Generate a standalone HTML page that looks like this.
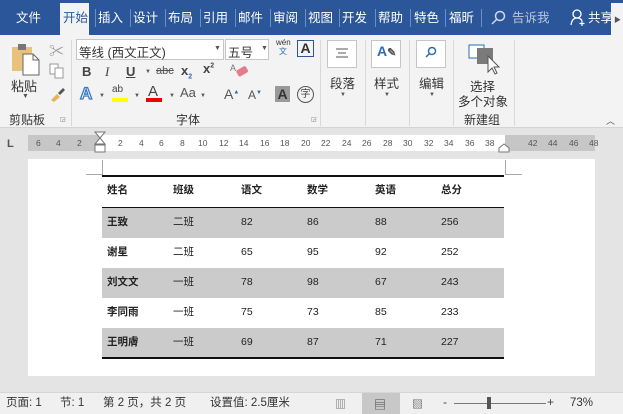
<!DOCTYPE html>
<html><head><meta charset="utf-8"><style>
*{margin:0;padding:0;box-sizing:border-box}
body{width:623px;height:414px;overflow:hidden;background:#e4e4e4;font-family:"Liberation Sans","Noto Sans CJK SC",sans-serif;font-size:12px;color:#222;position:relative}
.a{position:absolute;white-space:nowrap}
.tb{background:#2b579a;left:0;top:0;width:623px;height:35px}
.tab{color:#fff;font-size:12.5px;top:9px;line-height:18px}
.sep{position:absolute;top:9px;width:1px;height:18px;background:#6d8fc0}
.rib{left:0;top:35px;width:623px;height:93px;background:#f3f3f3;border-bottom:1px solid #d4d4d4}
.vs{position:absolute;width:1px;background:#d8d8d8;top:40px;height:86px}
.gl{font-size:12px;color:#333}
.box{position:absolute;border:1px solid #c6c6c6;background:#fff}
.page{left:28px;top:159px;width:567px;height:217px;background:#fff}
.row{position:absolute;left:102px;width:402px;height:30px}
.c{position:absolute;top:7px;font-size:10.5px;line-height:15px;color:#222}
.b{font-weight:bold}
.st{font-size:11.5px;color:#333;top:396px;line-height:15px}
</style></head><body>
<div class="a tb"></div>
<div class="a" style="left:60px;top:3px;width:29px;height:32px;background:#f3f3f3"></div>
<div class="a tab" style="left:16px">文件</div>
<div class="a tab" style="left:63px;color:#2b579a">开始</div>
<div class="a tab" style="left:98px">插入</div>
<div class="a tab" style="left:133px">设计</div>
<div class="a tab" style="left:168px">布局</div>
<div class="a tab" style="left:203px">引用</div>
<div class="a tab" style="left:238px">邮件</div>
<div class="a tab" style="left:273px">审阅</div>
<div class="a tab" style="left:308px">视图</div>
<div class="a tab" style="left:342px">开发</div>
<div class="a tab" style="left:378px">帮助</div>
<div class="a tab" style="left:414px">特色</div>
<div class="a tab" style="left:449px">福昕</div>
<div class="sep" style="left:95px"></div><div class="sep" style="left:130px"></div><div class="sep" style="left:165px"></div><div class="sep" style="left:200px"></div><div class="sep" style="left:235px"></div><div class="sep" style="left:270px"></div><div class="sep" style="left:305px"></div><div class="sep" style="left:339px"></div><div class="sep" style="left:375px"></div><div class="sep" style="left:410px"></div><div class="sep" style="left:445px"></div><div class="sep" style="left:481px"></div>
<svg class="a" style="left:490px;top:10px" width="16" height="16"><circle cx="10" cy="6" r="4.5" stroke="#cfd9ea" fill="none" stroke-width="1.5"/><line x1="7" y1="9" x2="2" y2="14" stroke="#cfd9ea" stroke-width="1.5"/></svg>
<div class="a tab" style="left:512px;color:#b8c6dc">告诉我</div>
<svg class="a" style="left:570px;top:9px" width="16" height="18"><circle cx="7" cy="5" r="4" stroke="#fff" fill="none" stroke-width="1.3"/><path d="M1 16 Q2 9 7 9 Q11 9 12 12" stroke="#fff" fill="none" stroke-width="1.3"/><path d="M12 12v5M9.5 14.5h5" stroke="#fff" stroke-width="1.2"/></svg>
<div class="a tab" style="left:588px">共享</div>
<div class="a" style="left:611px;top:3px;width:12px;height:32px;background:#f3f3f3;font-size:7px;color:#555;padding-top:12px;padding-left:3px">▶</div>

<div class="a rib"></div>
<svg class="a" style="left:11px;top:42px" width="30" height="34"><rect x="1" y="5" width="20" height="24" fill="#e8c27a"/><rect x="7" y="2" width="8" height="6" fill="#777"/><path d="M12 12h10l6 6v15H12z" fill="#fff" stroke="#666"/><path d="M22 12v6h6" fill="none" stroke="#666"/></svg>
<div class="a gl" style="left:11px;top:76px;font-size:13px">粘贴</div>
<div class="a" style="left:22px;top:93px;font-size:7px;color:#555">▼</div>
<div class="a" style="left:49px;top:40px;font-size:15px;color:#999">✂</div>
<svg class="a" style="left:49px;top:63px" width="16" height="16"><rect x="1" y="1" width="8" height="10" fill="#fff" stroke="#999"/><rect x="6" y="5" width="8" height="10" fill="#fff" stroke="#999"/></svg>
<svg class="a" style="left:48px;top:85px" width="18" height="18"><path d="M3 15 L9 9 L12 12 L6 17z" fill="#e8b25a"/><path d="M10 8 L15 3 L17 5 L12 10z" fill="#555"/></svg>
<div class="a gl" style="left:9px;top:111px">剪贴板</div>
<div class="a" style="left:60px;top:116px;font-size:6px;color:#777">◲</div>
<div class="vs" style="left:71px"></div>
<div class="box" style="left:76px;top:39px;width:148px;height:21px"></div>
<div class="a" style="left:79px;top:42px;font-size:12.5px;color:#333">等线 (西文正文)</div>
<div class="a" style="left:214px;top:45px;font-size:7px;color:#555">▼</div>
<div class="box" style="left:225px;top:39px;width:44px;height:21px"></div>
<div class="a" style="left:228px;top:42px;font-size:12.5px;color:#333">五号</div>
<div class="a" style="left:261px;top:45px;font-size:7px;color:#555">▼</div>
<div class="a" style="left:276px;top:38px;font-size:8px;color:#333;line-height:9px">wén<br><span style="color:#2b6cb0;padding-left:3px">文</span></div>
<div class="a" style="left:297px;top:40px;width:17px;height:17px;border:1.5px solid #2b579a;font-size:14px;font-weight:bold;text-align:center;line-height:14px;color:#333">A</div>
<div class="a" style="left:82px;top:64px;font-weight:bold;font-size:13px;color:#444">B</div>
<div class="a" style="left:105px;top:64px;font-style:italic;font-size:13px;font-family:'Liberation Serif';color:#444">I</div>
<div class="a" style="left:126px;top:64px;text-decoration:underline;font-size:13px;color:#444;font-weight:bold">U</div>
<div class="a" style="left:145px;top:69px;font-size:6px;color:#555">▼</div>
<div class="a" style="left:156px;top:65px;font-size:11px;color:#555;text-decoration:line-through">abc</div>
<div class="a" style="left:181px;top:63px;font-size:13px;color:#444;font-weight:bold">x<sub style="font-size:7px;color:#2b6cb0">2</sub></div>
<div class="a" style="left:203px;top:61px;font-size:13px;color:#444;font-weight:bold">x<sup style="font-size:7px">2</sup></div>
<svg class="a" style="left:230px;top:62px" width="20" height="18"><text x="0" y="9" font-size="9" fill="#777">A</text><rect x="7" y="6" width="11" height="7" rx="2" transform="rotate(-30 12 10)" fill="#e87b8b"/></svg>
<div class="a" style="left:80px;top:84px;font-size:17px;color:#fff;-webkit-text-stroke:1.3px #3b78c4;font-weight:bold">A</div>
<div class="a" style="left:99px;top:93px;font-size:6px;color:#555">▼</div>
<div class="a" style="left:112px;top:84px;font-size:10px;color:#444">ab</div>
<div class="a" style="left:112px;top:98px;width:16px;height:4px;background:#ffff00"></div>
<div class="a" style="left:134px;top:93px;font-size:6px;color:#555">▼</div>
<div class="a" style="left:148px;top:83px;font-size:15px;color:#444">A</div>
<div class="a" style="left:146px;top:98px;width:16px;height:4px;background:#e00"></div>
<div class="a" style="left:169px;top:93px;font-size:6px;color:#555">▼</div>
<div class="a" style="left:180px;top:85px;font-size:13px;color:#555">Aa</div>
<div class="a" style="left:200px;top:93px;font-size:6px;color:#555">▼</div>
<div class="a" style="left:224px;top:86px;font-size:14px;color:#555">A<sup style="font-size:6px;color:#2b6cb0">▲</sup></div>
<div class="a" style="left:248px;top:88px;font-size:12px;color:#555">A<sup style="font-size:6px;color:#2b6cb0">▼</sup></div>
<div class="a" style="left:275px;top:86px;width:15px;height:16px;background:#999;color:#333;font-weight:bold;font-size:14px;text-align:center;line-height:16px">A</div>
<div class="a" style="left:297px;top:86px;width:17px;height:17px;border:1.2px solid #555;border-radius:50%;font-size:10px;text-align:center;line-height:15px;color:#444">字</div>
<div class="a gl" style="left:176px;top:111px">字体</div>
<div class="a" style="left:311px;top:116px;font-size:6px;color:#777">◲</div>
<div class="vs" style="left:320px"></div>
<div class="box" style="left:327px;top:40px;width:30px;height:28px"></div>
<svg class="a" style="left:334px;top:48px" width="16" height="12"><path d="M2 1h12M4 5h8M2 9h12" stroke="#555"/></svg>
<div class="a gl" style="left:330px;top:73px;font-size:12.5px">段落</div>
<div class="a" style="left:340px;top:92px;font-size:6px;color:#555">▼</div>
<div class="vs" style="left:365px"></div>
<div class="box" style="left:371px;top:40px;width:30px;height:28px"></div>
<div class="a" style="left:377px;top:43px;font-size:14px;color:#2b6cb0;font-weight:bold">A<span style="color:#555;font-size:11px">✎</span></div>
<div class="a gl" style="left:374px;top:73px;font-size:12.5px">样式</div>
<div class="a" style="left:384px;top:92px;font-size:6px;color:#555">▼</div>
<div class="vs" style="left:409px"></div>
<div class="box" style="left:416px;top:40px;width:30px;height:28px"></div>
<svg class="a" style="left:424px;top:46px" width="14" height="14"><circle cx="8" cy="5" r="3.5" stroke="#2b6cb0" fill="none" stroke-width="1.5"/><line x1="5.5" y1="7.5" x2="2" y2="11" stroke="#2b6cb0" stroke-width="1.5"/></svg>
<div class="a gl" style="left:419px;top:73px;font-size:12.5px">编辑</div>
<div class="a" style="left:429px;top:92px;font-size:6px;color:#555">▼</div>
<div class="vs" style="left:453px"></div>
<svg class="a" style="left:468px;top:43px" width="34" height="32"><rect x="1" y="2" width="15" height="13" fill="#fff" stroke="#2b6cb0"/><rect x="9" y="5" width="16" height="16" fill="#7a7a7a"/><path d="M20 13 L20 29 L24 25 L27 31 L29 30 L26 24 L31 24z" fill="#fff" stroke="#555"/></svg>
<div class="a gl" style="left:470px;top:76px;font-size:12.5px">选择</div>
<div class="a gl" style="left:458px;top:91px;font-size:12.5px">多个对象</div>
<div class="a gl" style="left:464px;top:111px">新建组</div>
<div class="vs" style="left:514px"></div>
<div class="a" style="left:606px;top:114px;font-size:9px;color:#555">︿</div>

<div class="a" style="left:0;top:129px;width:623px;height:30px;background:#e4e4e4"></div>
<div class="a" style="left:7px;top:138px;font-size:11px;color:#555;font-weight:bold">L</div>
<div class="a" style="left:28px;top:135px;width:567px;height:16px;background:#c6c6c6"></div>
<div class="a" style="left:100px;top:135px;width:405px;height:16px;background:#fff"></div>
<div class="a" style="left:28px;top:138px;font-size:8.5px;color:#555;font-family:'Liberation Sans'">
<span class="a" style="left:8px">6</span><span class="a" style="left:28px">4</span><span class="a" style="left:49px">2</span><span class="a" style="left:90px">2</span><span class="a" style="left:111px">4</span><span class="a" style="left:131px">6</span><span class="a" style="left:152px">8</span><span class="a" style="left:170px">10</span><span class="a" style="left:191px">12</span><span class="a" style="left:211px">14</span><span class="a" style="left:232px">16</span><span class="a" style="left:252px">18</span><span class="a" style="left:273px">20</span><span class="a" style="left:293px">22</span><span class="a" style="left:314px">24</span><span class="a" style="left:334px">26</span><span class="a" style="left:355px">28</span><span class="a" style="left:375px">30</span><span class="a" style="left:396px">32</span><span class="a" style="left:416px">34</span><span class="a" style="left:437px">36</span><span class="a" style="left:457px">38</span><span class="a" style="left:500px">42</span><span class="a" style="left:520px">44</span><span class="a" style="left:541px">46</span><span class="a" style="left:561px">48</span></div>
<svg class="a" style="left:93px;top:131px" width="14" height="30"><path d="M2 1h10l-5 6 5 6H2l5-6z" fill="#fff" stroke="#777"/><rect x="2" y="14" width="10" height="7" fill="#fff" stroke="#777"/></svg>
<svg class="a" style="left:497px;top:143px" width="14" height="10"><path d="M2 9V5l5-4 5 4v4z" fill="#fff" stroke="#777"/></svg>

<div class="a page"></div>
<div class="a" style="left:102px;top:160px;width:1px;height:14px;background:#aaa"></div>
<div class="a" style="left:86px;top:174px;width:17px;height:1px;background:#aaa"></div>
<div class="a" style="left:505px;top:160px;width:1px;height:14px;background:#aaa"></div>
<div class="a" style="left:505px;top:174px;width:17px;height:1px;background:#aaa"></div>
<div class="a" style="left:102px;top:175px;width:402px;height:2px;background:#111"></div>
<div class="row" style="top:177px"><span class="c b" style="left:5px;top:6px">姓名</span><span class="c b" style="left:71px;top:6px">班级</span><span class="c b" style="left:139px;top:6px">语文</span><span class="c b" style="left:205px;top:6px">数学</span><span class="c b" style="left:273px;top:6px">英语</span><span class="c b" style="left:339px;top:6px">总分</span></div>
<div class="a" style="left:102px;top:207px;width:402px;height:1.5px;background:#111"></div>
<div class="row" style="top:208px;background:#cbcbcb"><span class="c b" style="left:5px">王致</span><span class="c" style="left:71px">二班</span><span class="c" style="left:139px">82</span><span class="c" style="left:205px">86</span><span class="c" style="left:273px">88</span><span class="c" style="left:339px">256</span></div>
<div class="row" style="top:238px"><span class="c b" style="left:5px">谢星</span><span class="c" style="left:71px">二班</span><span class="c" style="left:139px">65</span><span class="c" style="left:205px">95</span><span class="c" style="left:273px">92</span><span class="c" style="left:339px">252</span></div>
<div class="row" style="top:268px;background:#cbcbcb"><span class="c b" style="left:5px">刘文文</span><span class="c" style="left:71px">一班</span><span class="c" style="left:139px">78</span><span class="c" style="left:205px">98</span><span class="c" style="left:273px">67</span><span class="c" style="left:339px">243</span></div>
<div class="row" style="top:298px"><span class="c b" style="left:5px">李同雨</span><span class="c" style="left:71px">一班</span><span class="c" style="left:139px">75</span><span class="c" style="left:205px">73</span><span class="c" style="left:273px">85</span><span class="c" style="left:339px">233</span></div>
<div class="row" style="top:328px;background:#cbcbcb"><span class="c b" style="left:5px">王明膚</span><span class="c" style="left:71px">一班</span><span class="c" style="left:139px">69</span><span class="c" style="left:205px">87</span><span class="c" style="left:273px">71</span><span class="c" style="left:339px">227</span></div>
<div class="a" style="left:102px;top:357px;width:402px;height:1.5px;background:#111"></div>

<div class="a" style="left:0;top:392px;width:623px;height:22px;background:#f0f0f0;border-top:1px solid #d6d6d6"></div>
<div class="a st" style="left:6px">页面: 1</div>
<div class="a st" style="left:60px">节: 1</div>
<div class="a st" style="left:103px">第 2 页，共 2 页</div>
<div class="a st" style="left:210px">设置值: 2.5厘米</div>
<div class="a" style="left:335px;top:396px;font-size:11px;color:#555">▥</div>
<div class="a" style="left:362px;top:393px;width:38px;height:21px;background:#c8c8c8"></div>
<div class="a" style="left:374px;top:396px;font-size:12px;color:#444">▤</div>
<div class="a" style="left:412px;top:396px;font-size:11px;color:#555">▧</div>
<div class="a" style="left:443px;top:395px;font-size:12px;color:#444">-</div>
<div class="a" style="left:454px;top:403px;width:92px;height:1px;background:#777"></div>
<div class="a" style="left:487px;top:397px;width:4px;height:12px;background:#555"></div>
<div class="a" style="left:547px;top:395px;font-size:12px;color:#444">+</div>
<div class="a st" style="left:570px">73%</div>
</body></html>
